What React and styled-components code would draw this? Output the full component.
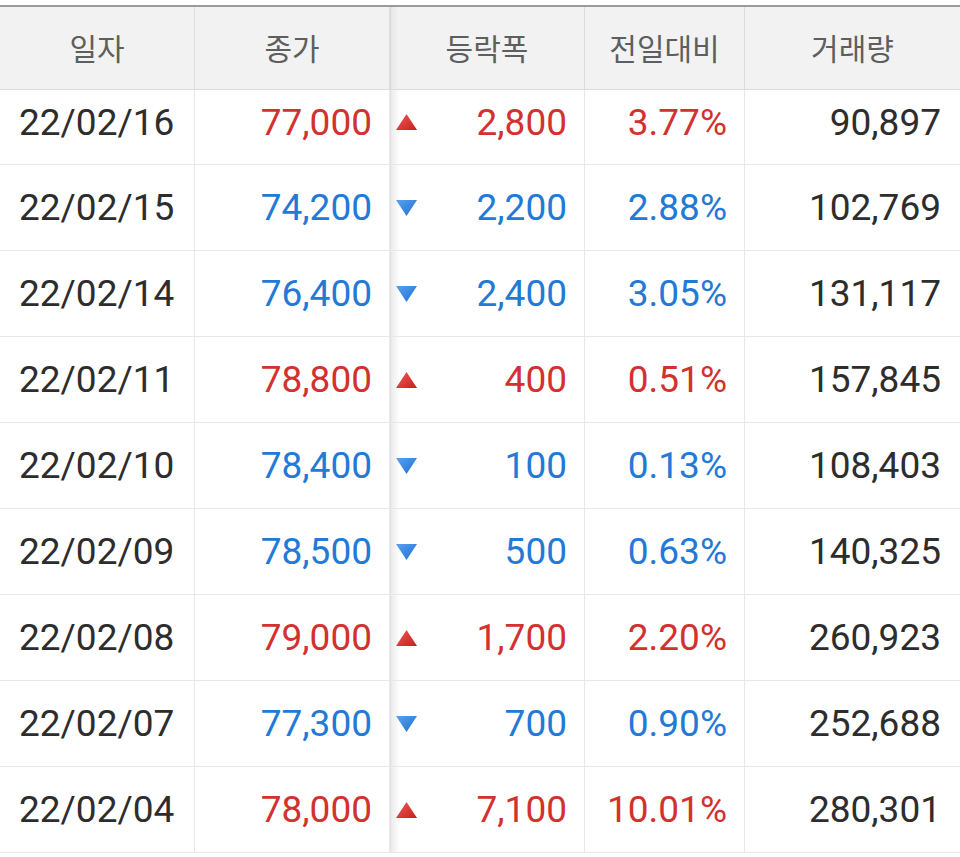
import React from "react";
import styled, { createGlobalStyle } from "styled-components";

const rows = [
  { date: "22/02/16", close: "77,000", dir: "up", diff: "2,800", rate: "3.77%", vol: "90,897" },
  { date: "22/02/15", close: "74,200", dir: "down", diff: "2,200", rate: "2.88%", vol: "102,769" },
  { date: "22/02/14", close: "76,400", dir: "down", diff: "2,400", rate: "3.05%", vol: "131,117" },
  { date: "22/02/11", close: "78,800", dir: "up", diff: "400", rate: "0.51%", vol: "157,845" },
  { date: "22/02/10", close: "78,400", dir: "down", diff: "100", rate: "0.13%", vol: "108,403" },
  { date: "22/02/09", close: "78,500", dir: "down", diff: "500", rate: "0.63%", vol: "140,325" },
  { date: "22/02/08", close: "79,000", dir: "up", diff: "1,700", rate: "2.20%", vol: "260,923" },
  { date: "22/02/07", close: "77,300", dir: "down", diff: "700", rate: "0.90%", vol: "252,688" },
  { date: "22/02/04", close: "78,000", dir: "up", diff: "7,100", rate: "10.01%", vol: "280,301" },
];

const colors = { up: "#d3312f", down: "#2379d6" };

const Arrow = ({ dir }) => {
  const id = `grad-${dir}`;
  return (
    <ArrowSvg width="21" height="16" viewBox="0 0 21 16">
      <defs>
        <linearGradient id={id} x1="0" y1="0" x2="1" y2="1">
          <stop offset="0" stopColor={dir === "up" ? "#f25a55" : "#5aa2f0"} />
          <stop offset="1" stopColor={dir === "up" ? "#c4201e" : "#1f6fd0"} />
        </linearGradient>
      </defs>
      {dir === "up" ? (
        <polygon points="10.5,0 21,16 0,16" fill={`url(#${id})`} />
      ) : (
        <polygon points="0,0 21,0 10.5,16" fill={`url(#${id})`} />
      )}
    </ArrowSvg>
  );
};

const App = () => {
  return (
    <>
      <GlobalStyle />
      <Page>
        <TopLine />
        <Header>
          <HeadCell>일자</HeadCell>
          <HeadCell>종가</HeadCell>
          <HeadCell $shadow>등락폭</HeadCell>
          <HeadCell>전일대비</HeadCell>
          <HeadCell $last>거래량</HeadCell>
        </Header>
        {rows.map((r, i) => {
          const first = i === 0;
          return (
            <Row key={r.date} $first={first}>
              <Cell $first={first} $align="left">{r.date}</Cell>
              <Cell $first={first} $color={colors[r.dir]}>{r.close}</Cell>
              <Cell $first={first} $shadow $color={colors[r.dir]}>
                <Arrow dir={r.dir} />
                <span>{r.diff}</span>
              </Cell>
              <Cell $first={first} $color={colors[r.dir]}>{r.rate}</Cell>
              <Cell $first={first} $last>{r.vol}</Cell>
            </Row>
          );
        })}
      </Page>
    </>
  );
};

export default App;

const GlobalStyle = createGlobalStyle`
  html, body {
    margin: 0;
    padding: 0;
    background: #fff;
  }
  body {
    font-family: Roboto, "Noto Sans CJK KR", sans-serif;
  }
`;

const Page = styled.div`
  width: 960px;
  height: 857px;
  overflow: hidden;
  background: #fff;
  padding-top: 5px;
  box-sizing: border-box;
`;

const TopLine = styled.div`
  height: 2px;
  background: #9a9a9a;
`;

const grid = `
  display: grid;
  grid-template-columns: 195px 195px 195px 160px 215px;
  box-sizing: border-box;
`;

const Header = styled.div`
  ${grid}
  height: 83px;
  background: #f2f2f2;
  border-bottom: 1px solid #dcdcdc;
`;

const HeadCell = styled.div`
  display: flex;
  align-items: center;
  justify-content: center;
  font-family: "Noto Sans CJK KR", Roboto, sans-serif;
  font-size: 30px;
  color: #5e5e5e;
  border-right: ${(p) => (p.$last ? "none" : "1px solid #dcdcdc")};
  padding-bottom: 2px;
  box-sizing: border-box;
  background: ${(p) =>
    p.$shadow
      ? "linear-gradient(to right, #d8d8d8 0px, #e9e9e9 2px, #f2f2f2 9px)"
      : "transparent"};
`;

const Row = styled.div`
  ${grid}
  height: ${(p) => (p.$first ? "75px" : "86px")};
  border-bottom: 1px solid #e8e8e8;
`;

const Cell = styled.div`
  display: flex;
  align-items: center;
  justify-content: ${(p) =>
    p.$align === "left" ? "flex-start" : p.$shadow ? "space-between" : "flex-end"};
  padding-left: ${(p) => (p.$align === "left" ? "19px" : p.$shadow ? "6px" : "0")};
  padding-right: ${(p) => (p.$align === "left" ? "0" : p.$last ? "19px" : "17px")};
  padding-bottom: ${(p) => (p.$first ? "10px" : "0")};
  font-size: 37px;
  color: ${(p) => p.$color || "#2d2d2d"};
  border-right: ${(p) => (p.$last ? "none" : "1px solid #e8e8e8")};
  box-sizing: border-box;
  background: ${(p) =>
    p.$shadow
      ? "linear-gradient(to right, #dedede 0px, #eeeeee 2px, #ffffff 10px)"
      : "transparent"};
`;

const ArrowSvg = styled.svg`
  display: block;
  flex: none;
`;
